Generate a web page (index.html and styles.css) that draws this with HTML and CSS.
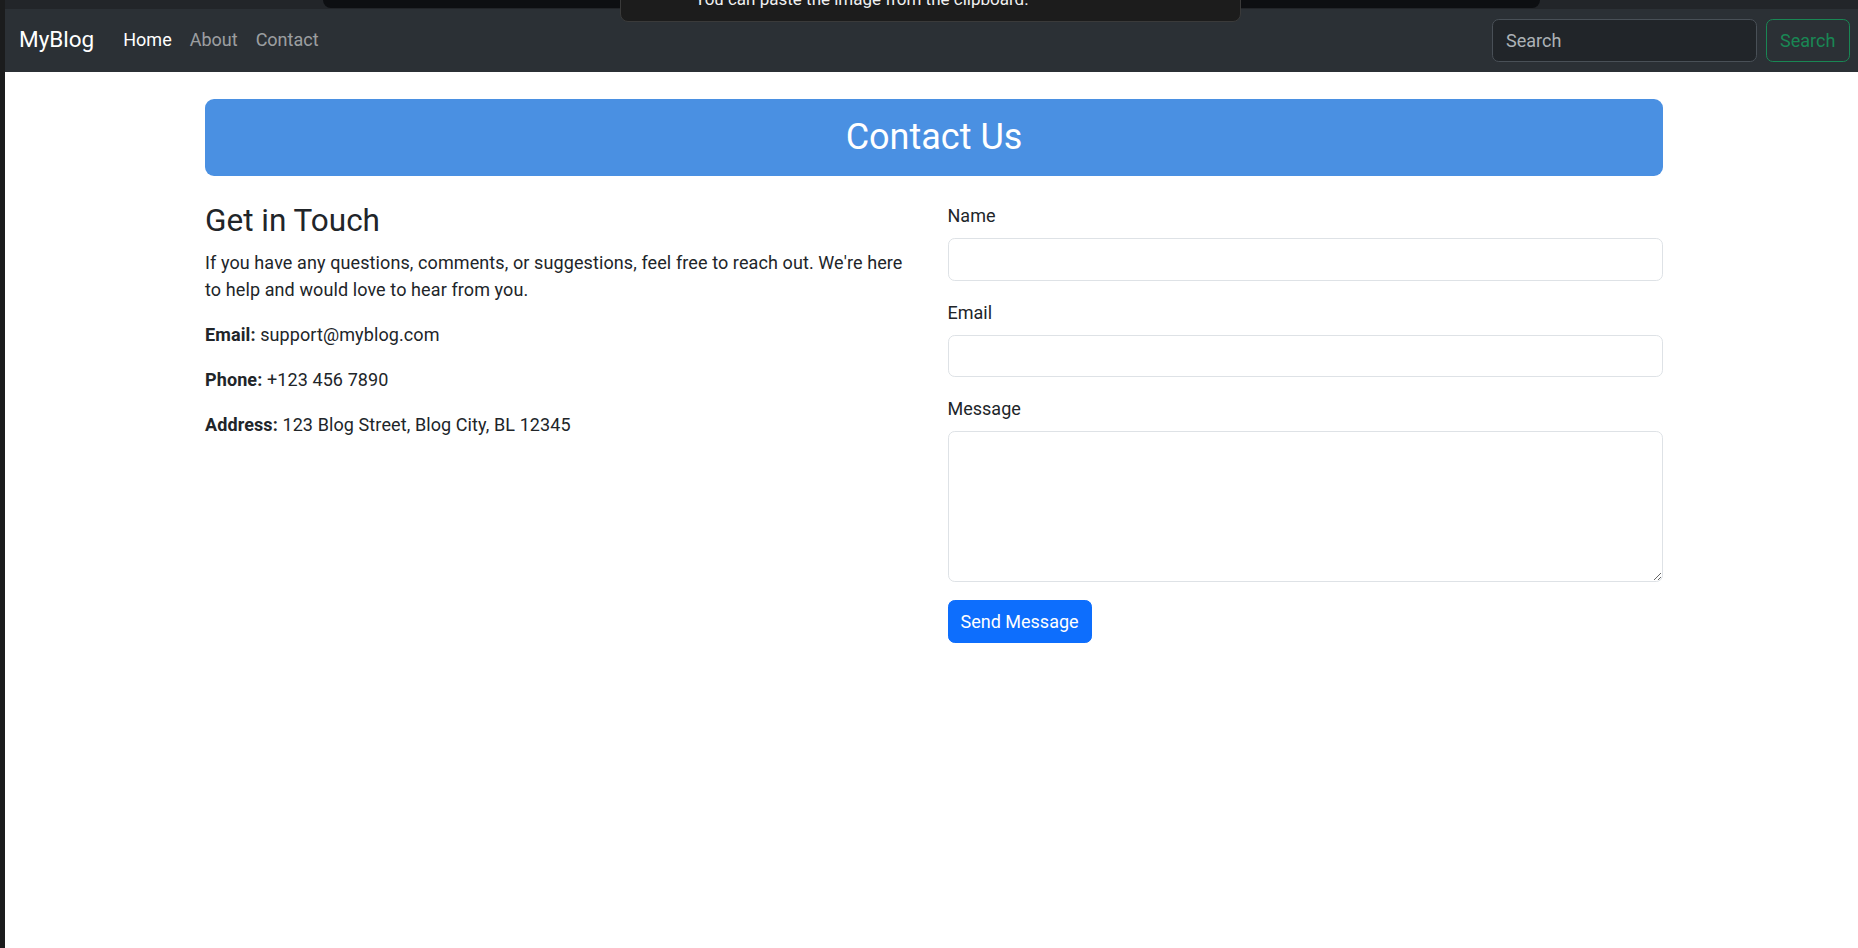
FILE: index.html
```html
<!DOCTYPE html>
<html lang="en">
<head>
<meta charset="utf-8">
<title>Contact Us - MyBlog</title>
<link rel="stylesheet" href="styles.css">
</head>
<body>
<div class="chrome-top">
  <div class="chrome-bar"></div>
  <div class="paste-toast"><span class="paste-text">You can paste the image from the clipboard.</span></div>
</div>
<div class="page">
  <nav class="navbar">
    <div class="nav-left">
      <a class="brand" href="#">MyBlog</a>
      <ul class="nav-links">
        <li><a class="nav-link active" href="#">Home</a></li>
        <li><a class="nav-link" href="#">About</a></li>
        <li><a class="nav-link" href="#">Contact</a></li>
      </ul>
    </div>
    <form class="search-form">
      <input class="search-input" type="search" placeholder="Search">
      <button class="search-btn" type="button">Search</button>
    </form>
  </nav>
  <main class="container">
    <div class="banner"><h2 class="banner-title">Contact Us</h2></div>
    <div class="row">
      <section class="col">
        <h3 class="touch-title">Get in Touch</h3>
        <p class="text">If you have any questions, comments, or suggestions, feel free to reach out. We're here to help and would love to hear from you.</p>
        <p class="text"><strong>Email:</strong> support@myblog.com</p>
        <p class="text"><strong>Phone:</strong> +123 456 7890</p>
        <p class="text"><strong>Address:</strong> 123 Blog Street, Blog City, BL 12345</p>
      </section>
      <section class="col">
        <form class="contact-form">
          <div class="field">
            <label class="label" for="name">Name</label>
            <input class="control" id="name" type="text">
          </div>
          <div class="field">
            <label class="label" for="email">Email</label>
            <input class="control" id="email" type="email">
          </div>
          <div class="field">
            <label class="label" for="message">Message</label>
            <textarea class="control textarea" id="message" rows="5"></textarea>
          </div>
          <button class="send-btn" type="button">Send Message</button>
        </form>
      </section>
    </div>
  </main>
</div>
</body>
</html>
```
FILE: styles.css
```css
html {
  background: #1b1c1d;
  overflow: hidden;
}
body {
  margin: 0;
  font-family: Roboto, "Liberation Sans", sans-serif;
  color: #212529;
}
.chrome-top {
  height: 9px;
  margin-left: 5px;
  background: #222529;
  position: relative;
}
.chrome-bar {
  position: absolute;
  left: 318px;
  top: 0;
  width: 1217px;
  height: 8px;
  background: #0d0f12;
  border-radius: 0 0 9px 9px;
}
.paste-toast {
  position: absolute;
  left: 615px;
  top: -30px;
  width: 621px;
  height: 52px;
  background: #1c1c1c;
  border: 1px solid #3a3a3a;
  border-radius: 8px;
  z-index: 5;
  box-sizing: border-box;
  overflow: hidden;
}
.paste-text {
  position: absolute;
  left: 74px;
  top: 18px;
  font-size: 17px;
  line-height: 20px;
  color: #f0f0f0;
  white-space: nowrap;
}
.page {
  margin-left: 5px;
  width: 1858px;
  background: #fff;
  height: 939px;
}
.navbar {
  display: flex;
  justify-content: space-between;
  align-items: center;
  height: 63px;
  box-sizing: border-box;
  padding: 9px 13.5px 9px 14px;
  background: #2b3035;
}
.nav-left {
  display: flex;
  align-items: center;
}
.brand {
  font-size: 22.5px;
  line-height: 33.75px;
  padding: 4.6px 0 6.6px;
  margin-right: 20px;
  color: #fff;
  text-decoration: none;
}
.nav-links {
  display: flex;
  list-style: none;
  margin: 0;
  padding: 0;
}
.nav-link {
  display: block;
  font-size: 18px;
  line-height: 27px;
  padding: 8px 9px 10px;
  color: rgba(255, 255, 255, 0.55);
  text-decoration: none;
}
.nav-link.active {
  color: #fff;
}
.search-form {
  display: flex;
  align-items: center;
  margin: 0;
}
.search-input {
  width: 265px;
  height: 43px;
  box-sizing: border-box;
  padding: 6.75px 13.5px;
  font-family: inherit;
  font-size: 18px;
  color: #dee2e6;
  background: #212529;
  border: 1px solid #495057;
  border-radius: 6.75px;
  outline: none;
  -webkit-appearance: none;
  appearance: none;
}
.search-input::placeholder {
  color: rgba(222, 226, 230, 0.75);
}
.search-btn {
  margin-left: 9px;
  width: 84px;
  height: 43px;
  box-sizing: border-box;
  padding: 6.75px 13.5px;
  font-family: inherit;
  font-size: 18px;
  color: #198754;
  background: transparent;
  border: 1px solid #198754;
  border-radius: 6.75px;
}
.container {
  width: 1458px;
  margin: 0 auto;
}
.banner {
  margin-top: 27px;
  background: #4a90e2;
  border-radius: 9px;
  padding: 16.9px 0;
  text-align: center;
}
.banner-title {
  margin: 0;
  font-size: 36px;
  line-height: 43.2px;
  font-weight: 400;
  color: #fff;
}
.row {
  display: grid;
  grid-template-columns: 1fr 1fr;
  column-gap: 27px;
  margin-top: 26px;
}
.touch-title {
  margin: 0 0 9px;
  font-size: 31.5px;
  line-height: 37.8px;
  font-weight: 400;
  color: #212529;
}
.text {
  margin: 0 0 18px;
  font-size: 18px;
  line-height: 27px;
  letter-spacing: 0.1px;
}
.text strong {
  font-weight: 700;
}
.contact-form {
  margin: 0;
}
.field {
  margin-bottom: 18px;
}
.label {
  display: block;
  margin-bottom: 9px;
  font-size: 18px;
  line-height: 27px;
}
.control {
  display: block;
  width: 100%;
  height: 42.75px;
  box-sizing: border-box;
  padding: 6.75px 13.5px;
  font-family: inherit;
  font-size: 18px;
  line-height: 27px;
  color: #212529;
  background: #fff;
  border: 1px solid #dee2e6;
  border-radius: 6.75px;
  outline: none;
  margin: 0;
}
.textarea {
  height: 150.75px;
  resize: vertical;
}
.send-btn {
  display: inline-block;
  height: 42.75px;
  box-sizing: border-box;
  padding: 6.75px 12px;
  font-family: inherit;
  font-size: 18px;
  line-height: 27px;
  color: #fff;
  background: #0d6efd;
  border: 1px solid #0d6efd;
  border-radius: 6.75px;
}
```
